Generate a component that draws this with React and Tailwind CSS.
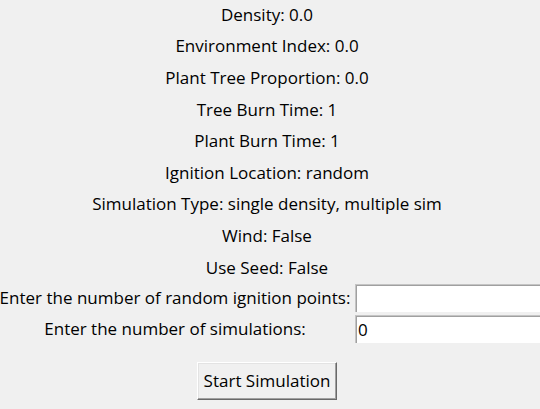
export default function App() {
  const lines = [
    "Density: 0.0",
    "Environment Index: 0.0",
    "Plant Tree Proportion: 0.0",
    "Tree Burn Time: 1",
    "Plant Burn Time: 1",
    "Ignition Location: random",
    "Simulation Type: single density, multiple sim",
    "Wind: False",
    "Use Seed: False",
  ];
  const entries = [
    { label: "Enter the number of random ignition points:", value: "" },
    { label: "Enter the number of simulations:", value: "0" },
  ];
  return (
    <div className="w-[540px] h-[409px] overflow-hidden bg-[#f0f0f0] text-black text-[17px] leading-[20px] font-['Open_Sans','Noto_Sans',sans-serif]">
      <div className="w-[534px] flex flex-col items-center -mt-px">
        {lines.map((l) => (
          <div key={l} className="h-[31.6px] flex items-center whitespace-nowrap">
            {l}
          </div>
        ))}
      </div>
      <div className="mt-px flex flex-col gap-[3px]">
        {entries.map((e) => (
          <div key={e.label} className="flex h-[28px] items-center">
            <div className="w-[350px] shrink-0 flex justify-center whitespace-nowrap">{e.label}</div>
            <div className="ml-[5px] w-[185px] shrink-0 h-full bg-white border-t border-l border-[#c4c4c4] shadow-[inset_1px_1px_0_#a0a0a0] pl-[2px] flex items-center">
              {e.value}
            </div>
          </div>
        ))}
      </div>
      <div className="w-[534px] flex justify-center mt-[18.6px]">
        <button className="w-[140px] h-[38px] flex items-center justify-center bg-[#f0f0f0] border-t border-l border-white border-b border-r border-b-[#696969] border-r-[#696969] shadow-[inset_-1px_-1px_0_#a0a0a0,inset_1px_1px_0_#e3e3e3] whitespace-nowrap">
          Start Simulation
        </button>
      </div>
    </div>
  );
}
